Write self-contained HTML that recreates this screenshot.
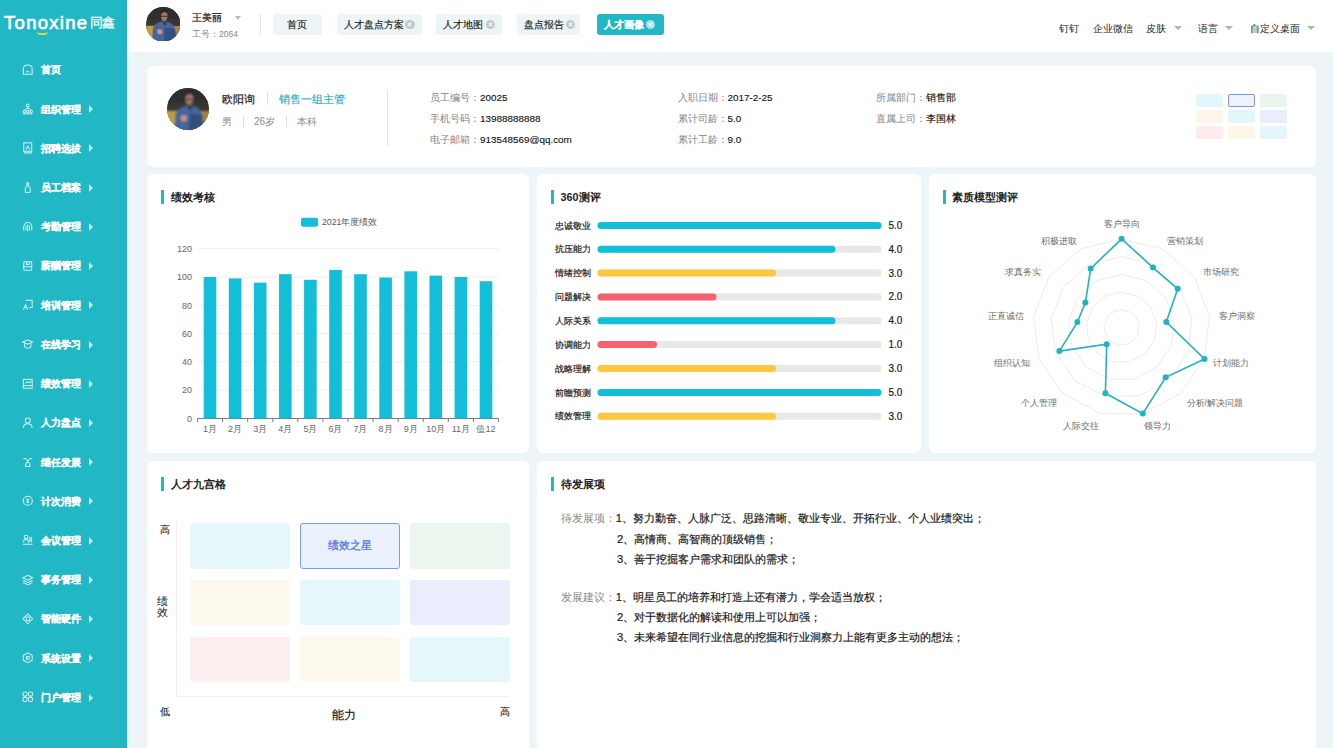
<!DOCTYPE html><html><head><meta charset="utf-8"><style>
*{box-sizing:border-box;margin:0;padding:0}
html,body{width:1333px;height:748px;overflow:hidden;background:#edf5f8;font-family:"Liberation Sans",sans-serif;color:#333}
.ab{position:absolute;white-space:nowrap}
#side{position:absolute;left:0;top:0;width:126.8px;height:748px;background:#22b7c4}
#hdr{position:absolute;left:126.8px;top:0;width:1207px;height:52px;background:#fff}
.card{position:absolute;background:#fff;border-radius:6px}
.mi{position:absolute;left:0;width:126px;height:20px;color:#fff;font-weight:900;font-size:10px}
.mi .t{position:absolute;left:41px;top:3px;line-height:14px;-webkit-text-stroke:0.2px #fff}
.mi svg.ic{position:absolute;left:22.3px;top:3.6px}
.mi .ar{position:absolute;left:89px;top:5.8px;width:0;height:0;border-left:4.6px solid rgba(255,255,255,.72);border-top:4.1px solid transparent;border-bottom:4.1px solid transparent}
.tab{position:absolute;top:14px;height:21px;border-radius:3px;background:#eef5f8;font-size:10px;line-height:21px;color:#222;-webkit-text-stroke:0.15px currentColor}
.tab .x{position:absolute;top:5.8px;width:9.6px;height:9.6px;border-radius:50%;background:#c4c8cb}
.tab .x:before,.tab .x:after{content:"";position:absolute;left:4.15px;top:2.3px;width:1.3px;height:5px;background:#fff;transform:rotate(45deg)}
.tab .x:after{transform:rotate(-45deg)}
.ttl{position:absolute;font-size:10.8px;font-weight:bold;color:#222;line-height:14px}
.ttl:before{content:"";position:absolute;left:-9.2px;top:0px;width:3px;height:14px;background:#22b7c4}
.lbl{color:#888}
.tri{position:absolute;width:0;height:0;border-top:4px solid #aab3b6;border-left:4px solid transparent;border-right:4px solid transparent}
</style></head><body>

<div id="side"><div class="ab" style="left:120.8px;top:0;width:6px;height:748px;background:#21b3c6"></div>
<div class="ab" style="left:4px;top:13.2px;font-size:18.5px;line-height:20px;color:#fff;letter-spacing:1.3px;font-weight:normal;-webkit-text-stroke:0.7px #fff">Tonoxine</div>
<div class="ab" style="left:90.2px;top:15px;font-size:13.4px;line-height:16px;color:#fff;letter-spacing:-0.9px;-webkit-text-stroke:0.2px #fff">同鑫</div>
<div class="ab" style="left:37px;top:31px;width:11px;height:4px;border-bottom:2.5px solid #f5d33a;border-radius:0 0 6px 6px"></div>
<div class="mi" style="top:60.3px"><svg class="ic" width="11.5" height="11.5" viewBox="0 0 13 13" fill="none" stroke="rgba(255,255,255,.8)" stroke-width="1.15"><path d="M1.5 11.5V5.5C1.5 3 3.5 1 6.5 1S11.5 3 11.5 5.5V11.5z"/><path d="M4.5 8.8h4"/></svg><span class="t">首页</span></div>
<div class="mi" style="top:99.5px"><svg class="ic" width="11.5" height="11.5" viewBox="0 0 13 13" fill="none" stroke="rgba(255,255,255,.8)" stroke-width="1.15"><circle cx="6.5" cy="2.6" r="1.6"/><path d="M6.5 4.2v1.6M3 7.5l3.5-1.7 3.5 1.7"/><circle cx="2.6" cy="9.6" r="1.3"/><circle cx="6.5" cy="9.6" r="1.3"/><circle cx="10.4" cy="9.6" r="1.3"/><path d="M1 12.2h11"/></svg><span class="t">组织管理</span><div class="ar"></div></div>
<div class="mi" style="top:138.7px"><svg class="ic" width="11.5" height="11.5" viewBox="0 0 13 13" fill="none" stroke="rgba(255,255,255,.8)" stroke-width="1.15"><rect x="2" y="1" width="9" height="9.5"/><path d="M4.5 8.5l2-4 2 4M2 12.3h9"/></svg><span class="t">招聘选拔</span><div class="ar"></div></div>
<div class="mi" style="top:178.0px"><svg class="ic" width="11.5" height="11.5" viewBox="0 0 13 13" fill="none" stroke="rgba(255,255,255,.8)" stroke-width="1.15"><circle cx="6.5" cy="2" r="1.3"/><path d="M5.2 4.5C3.5 7 3.5 10.5 4.3 12h4.4c.8-1.5.8-5-.9-7.5z"/></svg><span class="t">员工档案</span><div class="ar"></div></div>
<div class="mi" style="top:217.2px"><svg class="ic" width="11.5" height="11.5" viewBox="0 0 13 13" fill="none" stroke="rgba(255,255,255,.8)" stroke-width="1.15"><path d="M2 10.5C1 6 3 1.5 6.5 1.5S12 6 11 10.5"/><path d="M4.5 5v6M6.5 4v7.5M8.5 5v6"/></svg><span class="t">考勤管理</span><div class="ar"></div></div>
<div class="mi" style="top:256.4px"><svg class="ic" width="11.5" height="11.5" viewBox="0 0 13 13" fill="none" stroke="rgba(255,255,255,.8)" stroke-width="1.15"><rect x="2" y="2" width="9" height="9.5" rx="1"/><path d="M2 7.5h9M5 2v3h3V2"/></svg><span class="t">薪酬管理</span><div class="ar"></div></div>
<div class="mi" style="top:295.6px"><svg class="ic" width="11.5" height="11.5" viewBox="0 0 13 13" fill="none" stroke="rgba(255,255,255,.8)" stroke-width="1.15"><path d="M4 1.5h7.5v8H8M1.5 12l2.5-5.5 2.5 5.5M2.4 10h3"/></svg><span class="t">培训管理</span><div class="ar"></div></div>
<div class="mi" style="top:334.8px"><svg class="ic" width="11.5" height="11.5" viewBox="0 0 13 13" fill="none" stroke="rgba(255,255,255,.8)" stroke-width="1.15"><path d="M1 4.5l5.5-2.5 5.5 2.5-5.5 2.5z"/><path d="M3 5.8v4.2c2 2 5 2 7 0V5.8"/></svg><span class="t">在线学习</span><div class="ar"></div></div>
<div class="mi" style="top:374.1px"><svg class="ic" width="11.5" height="11.5" viewBox="0 0 13 13" fill="none" stroke="rgba(255,255,255,.8)" stroke-width="1.15"><rect x="1.5" y="1.5" width="10" height="10"/><path d="M1.5 8.5h10M3.5 6l2.5-2 2 1.5 2.5-2"/></svg><span class="t">绩效管理</span><div class="ar"></div></div>
<div class="mi" style="top:413.3px"><svg class="ic" width="11.5" height="11.5" viewBox="0 0 13 13" fill="none" stroke="rgba(255,255,255,.8)" stroke-width="1.15"><circle cx="6.5" cy="4" r="2.8"/><path d="M1.5 12.5c0-3 2.2-5 5-5s5 2 5 5"/></svg><span class="t">人力盘点</span><div class="ar"></div></div>
<div class="mi" style="top:452.5px"><svg class="ic" width="11.5" height="11.5" viewBox="0 0 13 13" fill="none" stroke="rgba(255,255,255,.8)" stroke-width="1.15"><path d="M1.5 3c2.5-1 4.5 1 5 4M11.5 3c-2.5-1-4.5 1-5 4M4 12c0-3 1-5 2.5-5S9 9 9 12z"/></svg><span class="t">继任发展</span><div class="ar"></div></div>
<div class="mi" style="top:491.7px"><svg class="ic" width="11.5" height="11.5" viewBox="0 0 13 13" fill="none" stroke="rgba(255,255,255,.8)" stroke-width="1.15"><circle cx="6.5" cy="6.5" r="5.2"/><path d="M4.7 4l1.8 2.3 1.8-2.3M6.5 6.3v3.2M4.6 7.5h3.8"/></svg><span class="t">计次消费</span><div class="ar"></div></div>
<div class="mi" style="top:530.9px"><svg class="ic" width="11.5" height="11.5" viewBox="0 0 13 13" fill="none" stroke="rgba(255,255,255,.8)" stroke-width="1.15"><circle cx="4.5" cy="3.5" r="2"/><path d="M1.5 9.5c0-2 1.4-3.3 3-3.3s3 1.3 3 3.3"/><circle cx="9.6" cy="5" r="1.4"/><path d="M8 9.5c.3-1.5 1-2.2 1.6-2.2s1.4.7 1.7 2.2M1 11.5h11"/></svg><span class="t">会议管理</span><div class="ar"></div></div>
<div class="mi" style="top:570.2px"><svg class="ic" width="11.5" height="11.5" viewBox="0 0 13 13" fill="none" stroke="rgba(255,255,255,.8)" stroke-width="1.15"><path d="M6.5 1.5l5.5 2.8-5.5 2.8L1 4.3z"/><path d="M1 7l5.5 2.8L12 7M1 9.5l5.5 2.8 5.5-2.8"/></svg><span class="t">事务管理</span><div class="ar"></div></div>
<div class="mi" style="top:609.4px"><svg class="ic" width="11.5" height="11.5" viewBox="0 0 13 13" fill="none" stroke="rgba(255,255,255,.8)" stroke-width="1.15"><path d="M6.5 1l5.5 5.5-5.5 5.5L1 6.5z"/><rect x="4.5" y="4.5" width="4" height="4" rx="1"/></svg><span class="t">智能硬件</span><div class="ar"></div></div>
<div class="mi" style="top:648.6px"><svg class="ic" width="11.5" height="11.5" viewBox="0 0 13 13" fill="none" stroke="rgba(255,255,255,.8)" stroke-width="1.15"><path d="M6.5 1l5 2.8v5.4l-5 2.8-5-2.8V3.8z"/><rect x="5" y="5" width="3" height="3"/></svg><span class="t">系统设置</span><div class="ar"></div></div>
<div class="mi" style="top:687.8px"><svg class="ic" width="11.5" height="11.5" viewBox="0 0 13 13" fill="none" stroke="rgba(255,255,255,.8)" stroke-width="1.15"><rect x="1" y="1" width="4.8" height="4.8" rx="2"/><rect x="7.2" y="1" width="4.8" height="4.8" rx="2"/><rect x="1" y="7.2" width="4.8" height="4.8" rx="2"/><rect x="7.2" y="7.2" width="4.8" height="4.8" rx="2"/></svg><span class="t">门户管理</span><div class="ar"></div></div>
</div>
<div id="hdr"></div>
<svg class="ab" style="left:145.8px;top:6.6px" width="34.5" height="34.5" viewBox="0 0 100 100"><defs><clipPath id="c163"><circle cx="50" cy="50" r="50"/></clipPath><filter id="f163" x="-20%" y="-20%" width="140%" height="140%"><feGaussianBlur stdDeviation="2.2"/></filter></defs><g clip-path="url(#c163)"><rect width="100" height="100" fill="#383634"/><g filter="url(#f163)"><rect x="-5" y="-5" width="110" height="40" fill="#2f2e2d"/><path d="M-5 54 L32 54 L30 88 L-5 88z" fill="#c09e3a"/><path d="M70 55 L105 55 L105 82 L70 84z" fill="#a3873a"/><path d="M18 105 L20 62 C23 50 34 44 46 42 L62 42 C74 46 82 54 84 64 L88 105z" fill="#46659a"/><path d="M55 60 L84 64 L88 105 L52 105z" fill="#33507e"/><path d="M47 42 L55 56 L62 42z" fill="#2a4068"/><ellipse cx="53" cy="26" rx="9.5" ry="15" fill="#9c7664"/><path d="M42 22 C40 4 66 2 64 21 C60 12 48 12 42 22z" fill="#2a221e"/><path d="M43 27h20" stroke="#2f2622" stroke-width="2.4"/><ellipse cx="40" cy="72" rx="8" ry="8" fill="#c0947f"/></g></g></svg>
<div class="ab" style="left:192px;top:10.8px;font-size:9.7px;line-height:14px;color:#222;-webkit-text-stroke:0.2px #222">王美丽</div>
<div class="tri" style="left:234.5px;top:15.8px;border-top-color:#bbb;border-left-width:3.6px;border-right-width:3.6px"></div>
<div class="ab" style="left:192px;top:28px;font-size:8.5px;line-height:12px;color:#888">工号：2064</div>
<div class="ab" style="left:260px;top:14px;width:1px;height:21px;background:#e3e3e3"></div>
<div class="tab" style="left:273.0px;width:48.5px;text-align:center">首页</div>
<div class="tab" style="left:336.5px;width:85.0px;"><span style="position:absolute;left:7px">人才盘点方案</span><span class="x" style="left:68.7px;"></span></div>
<div class="tab" style="left:436.0px;width:66.0px;"><span style="position:absolute;left:7px">人才地图</span><span class="x" style="left:49.6px;"></span></div>
<div class="tab" style="left:517.0px;width:63.0px;"><span style="position:absolute;left:7px">盘点报告</span><span class="x" style="left:48.6px;"></span></div>
<div class="tab" style="left:597.0px;width:66.5px;background:#22b7c4;color:#fff;font-weight:bold;"><span style="position:absolute;left:7px">人才画像</span><span class="x" style="left:48.9px;background:rgba(255,255,255,.6)"></span></div>
<div class="ab" style="left:1058.5px;top:21.5px;font-size:9.8px;line-height:14px;color:#222">钉钉</div>
<div class="ab" style="left:1093.0px;top:21.5px;font-size:9.8px;line-height:14px;color:#222">企业微信</div>
<div class="ab" style="left:1146.0px;top:21.5px;font-size:9.8px;line-height:14px;color:#222">皮肤</div>
<div class="tri" style="left:1174.0px;top:26px"></div>
<div class="ab" style="left:1198.0px;top:21.5px;font-size:9.8px;line-height:14px;color:#222">语言</div>
<div class="tri" style="left:1225.0px;top:26px"></div>
<div class="ab" style="left:1250.0px;top:21.5px;font-size:9.8px;line-height:14px;color:#222">自定义桌面</div>
<div class="tri" style="left:1307.0px;top:26px"></div>
<div class="card" style="left:147.2px;top:66px;width:1168.8px;height:100.5px"></div>
<svg class="ab" style="left:166.5px;top:87.7px" width="42.0" height="42.0" viewBox="0 0 100 100"><defs><clipPath id="c187"><circle cx="50" cy="50" r="50"/></clipPath><filter id="f187" x="-20%" y="-20%" width="140%" height="140%"><feGaussianBlur stdDeviation="2.2"/></filter></defs><g clip-path="url(#c187)"><rect width="100" height="100" fill="#383634"/><g filter="url(#f187)"><rect x="-5" y="-5" width="110" height="40" fill="#2f2e2d"/><path d="M-5 54 L32 54 L30 88 L-5 88z" fill="#c09e3a"/><path d="M70 55 L105 55 L105 82 L70 84z" fill="#a3873a"/><path d="M18 105 L20 62 C23 50 34 44 46 42 L62 42 C74 46 82 54 84 64 L88 105z" fill="#46659a"/><path d="M55 60 L84 64 L88 105 L52 105z" fill="#33507e"/><path d="M47 42 L55 56 L62 42z" fill="#2a4068"/><ellipse cx="53" cy="26" rx="9.5" ry="15" fill="#9c7664"/><path d="M42 22 C40 4 66 2 64 21 C60 12 48 12 42 22z" fill="#2a221e"/><path d="M43 27h20" stroke="#2f2622" stroke-width="2.4"/><ellipse cx="40" cy="72" rx="8" ry="8" fill="#c0947f"/></g></g></svg>
<div class="ab" style="left:222.2px;top:91.5px;font-size:11.3px;line-height:15px;color:#1a1a1a;-webkit-text-stroke:0.2px #1a1a1a">欧阳询</div>
<div class="ab" style="left:266.5px;top:92px;width:1px;height:13px;background:#ddd"></div>
<div class="ab" style="left:278.5px;top:91.5px;font-size:11px;line-height:15px;color:#1eaac2;-webkit-text-stroke:0.15px #1eaac2">销售一组主管</div>
<div class="ab" style="left:222px;top:115px;font-size:10px;line-height:13px;color:#888">男</div>
<div class="ab" style="left:243px;top:116px;width:1px;height:11px;background:#ddd"></div>
<div class="ab" style="left:254px;top:115px;font-size:10px;line-height:13px;color:#888">26岁</div>
<div class="ab" style="left:285.5px;top:116px;width:1px;height:11px;background:#ddd"></div>
<div class="ab" style="left:297px;top:115px;font-size:10px;line-height:13px;color:#888">本科</div>
<div class="ab" style="left:387px;top:90px;width:1px;height:56px;background:#e3e3e3"></div>
<div class="ab" style="left:430.0px;top:91.3px;font-size:9.5px;line-height:13px"><span class="lbl" style="color:#828282">员工编号：</span><span style="color:#111;-webkit-text-stroke:0.12px #111;font-size:9.9px">20025</span></div>
<div class="ab" style="left:430.0px;top:111.8px;font-size:9.5px;line-height:13px"><span class="lbl" style="color:#828282">手机号码：</span><span style="color:#111;-webkit-text-stroke:0.12px #111;font-size:9.9px">13988888888</span></div>
<div class="ab" style="left:430.0px;top:132.5px;font-size:9.5px;line-height:13px"><span class="lbl" style="color:#828282">电子邮箱：</span><span style="color:#111;-webkit-text-stroke:0.12px #111;font-size:9.9px">913548569@qq.com</span></div>
<div class="ab" style="left:677.5px;top:91.3px;font-size:9.5px;line-height:13px"><span class="lbl" style="color:#828282">入职日期：</span><span style="color:#111;-webkit-text-stroke:0.12px #111;font-size:9.9px">2017-2-25</span></div>
<div class="ab" style="left:677.5px;top:111.8px;font-size:9.5px;line-height:13px"><span class="lbl" style="color:#828282">累计司龄：</span><span style="color:#111;-webkit-text-stroke:0.12px #111;font-size:9.9px">5.0</span></div>
<div class="ab" style="left:677.5px;top:132.5px;font-size:9.5px;line-height:13px"><span class="lbl" style="color:#828282">累计工龄：</span><span style="color:#111;-webkit-text-stroke:0.12px #111;font-size:9.9px">9.0</span></div>
<div class="ab" style="left:876.0px;top:91.3px;font-size:9.5px;line-height:13px"><span class="lbl" style="color:#828282">所属部门：</span><span style="color:#111;-webkit-text-stroke:0.12px #111;font-size:9.9px">销售部</span></div>
<div class="ab" style="left:876.0px;top:111.8px;font-size:9.5px;line-height:13px"><span class="lbl" style="color:#828282">直属上司：</span><span style="color:#111;-webkit-text-stroke:0.12px #111;font-size:9.9px">李国林</span></div>
<div class="ab" style="left:1196.4px;top:94.3px;width:27px;height:12.5px;border-radius:2px;background:#e3f6fb;"></div>
<div class="ab" style="left:1228.0px;top:94.3px;width:27px;height:12.5px;border-radius:2px;border:1px solid #7e95e8;background:#eef2fd;"></div>
<div class="ab" style="left:1259.6px;top:94.3px;width:27px;height:12.5px;border-radius:2px;background:#e9f5ec;"></div>
<div class="ab" style="left:1196.4px;top:110.3px;width:27px;height:12.5px;border-radius:2px;background:#fdf7ea;"></div>
<div class="ab" style="left:1228.0px;top:110.3px;width:27px;height:12.5px;border-radius:2px;background:#e3f6f8;"></div>
<div class="ab" style="left:1259.6px;top:110.3px;width:27px;height:12.5px;border-radius:2px;background:#eaedfc;"></div>
<div class="ab" style="left:1196.4px;top:126.3px;width:27px;height:12.5px;border-radius:2px;background:#fdebee;"></div>
<div class="ab" style="left:1228.0px;top:126.3px;width:27px;height:12.5px;border-radius:2px;background:#fdf7ea;"></div>
<div class="ab" style="left:1259.6px;top:126.3px;width:27px;height:12.5px;border-radius:2px;background:#e3f6fb;"></div>
<div class="card" style="left:147.2px;top:173.5px;width:382.3px;height:279.5px"></div>
<div class="card" style="left:537.3px;top:173.5px;width:383.7px;height:279.5px"></div>
<div class="card" style="left:929px;top:173.5px;width:387px;height:279.5px"></div>
<div class="card" style="left:147.2px;top:461px;width:382.3px;height:300px"></div>
<div class="card" style="left:537.3px;top:461px;width:778.7px;height:300px"></div>
<div class="ttl" style="left:170.5px;top:190px">绩效考核</div>
<div class="ttl" style="left:560.5px;top:190px">360测评</div>
<div class="ttl" style="left:952px;top:190px">素质模型测评</div>
<div class="ttl" style="left:170.5px;top:477px">人才九宫格</div>
<div class="ttl" style="left:560.5px;top:477px">待发展项</div>
<svg class="ab" style="left:0;top:0" width="1333" height="748"><text x="192" y="421.6" text-anchor="end" font-size="9" fill="#666" font-family="Liberation Sans">0</text><line x1="197.5" x2="498.5" y1="390.1" y2="390.1" stroke="#eeeeee" stroke-width="1"/><text x="192" y="393.3" text-anchor="end" font-size="9" fill="#666" font-family="Liberation Sans">20</text><line x1="197.5" x2="498.5" y1="361.8" y2="361.8" stroke="#eeeeee" stroke-width="1"/><text x="192" y="365.0" text-anchor="end" font-size="9" fill="#666" font-family="Liberation Sans">40</text><line x1="197.5" x2="498.5" y1="333.5" y2="333.5" stroke="#eeeeee" stroke-width="1"/><text x="192" y="336.7" text-anchor="end" font-size="9" fill="#666" font-family="Liberation Sans">60</text><line x1="197.5" x2="498.5" y1="305.3" y2="305.3" stroke="#eeeeee" stroke-width="1"/><text x="192" y="308.5" text-anchor="end" font-size="9" fill="#666" font-family="Liberation Sans">80</text><line x1="197.5" x2="498.5" y1="277.0" y2="277.0" stroke="#eeeeee" stroke-width="1"/><text x="192" y="280.2" text-anchor="end" font-size="9" fill="#666" font-family="Liberation Sans">100</text><line x1="197.5" x2="498.5" y1="248.7" y2="248.7" stroke="#eeeeee" stroke-width="1"/><text x="192" y="251.9" text-anchor="end" font-size="9" fill="#666" font-family="Liberation Sans">120</text><line x1="197.5" x2="498.5" y1="418.5" y2="418.5" stroke="#7a7a7a" stroke-width="1"/><rect x="203.7" y="277.0" width="12.6" height="141.4" fill="#12bed8"/><rect x="228.8" y="278.4" width="12.6" height="140.0" fill="#12bed8"/><rect x="253.9" y="282.6" width="12.6" height="135.8" fill="#12bed8"/><rect x="279.0" y="274.2" width="12.6" height="144.2" fill="#12bed8"/><rect x="304.1" y="279.8" width="12.6" height="138.6" fill="#12bed8"/><rect x="329.2" y="269.9" width="12.6" height="148.5" fill="#12bed8"/><rect x="354.2" y="274.2" width="12.6" height="144.2" fill="#12bed8"/><rect x="379.3" y="277.5" width="12.6" height="140.9" fill="#12bed8"/><rect x="404.4" y="271.3" width="12.6" height="147.1" fill="#12bed8"/><rect x="429.5" y="275.6" width="12.6" height="142.8" fill="#12bed8"/><rect x="454.6" y="277.0" width="12.6" height="141.4" fill="#12bed8"/><rect x="479.7" y="281.2" width="12.6" height="137.2" fill="#12bed8"/><line x1="197.5" x2="197.5" y1="418.5" y2="422" stroke="#7a7a7a" stroke-width="1"/><line x1="222.6" x2="222.6" y1="418.5" y2="422" stroke="#7a7a7a" stroke-width="1"/><line x1="247.7" x2="247.7" y1="418.5" y2="422" stroke="#7a7a7a" stroke-width="1"/><line x1="272.8" x2="272.8" y1="418.5" y2="422" stroke="#7a7a7a" stroke-width="1"/><line x1="297.8" x2="297.8" y1="418.5" y2="422" stroke="#7a7a7a" stroke-width="1"/><line x1="322.9" x2="322.9" y1="418.5" y2="422" stroke="#7a7a7a" stroke-width="1"/><line x1="348.0" x2="348.0" y1="418.5" y2="422" stroke="#7a7a7a" stroke-width="1"/><line x1="373.1" x2="373.1" y1="418.5" y2="422" stroke="#7a7a7a" stroke-width="1"/><line x1="398.2" x2="398.2" y1="418.5" y2="422" stroke="#7a7a7a" stroke-width="1"/><line x1="423.2" x2="423.2" y1="418.5" y2="422" stroke="#7a7a7a" stroke-width="1"/><line x1="448.3" x2="448.3" y1="418.5" y2="422" stroke="#7a7a7a" stroke-width="1"/><line x1="473.4" x2="473.4" y1="418.5" y2="422" stroke="#7a7a7a" stroke-width="1"/><line x1="498.5" x2="498.5" y1="418.5" y2="422" stroke="#7a7a7a" stroke-width="1"/><text x="210.0" y="432.0" text-anchor="middle" font-size="9" fill="#666" font-family="Liberation Sans">1月</text><text x="235.1" y="432.0" text-anchor="middle" font-size="9" fill="#666" font-family="Liberation Sans">2月</text><text x="260.2" y="432.0" text-anchor="middle" font-size="9" fill="#666" font-family="Liberation Sans">3月</text><text x="285.3" y="432.0" text-anchor="middle" font-size="9" fill="#666" font-family="Liberation Sans">4月</text><text x="310.4" y="432.0" text-anchor="middle" font-size="9" fill="#666" font-family="Liberation Sans">5月</text><text x="335.5" y="432.0" text-anchor="middle" font-size="9" fill="#666" font-family="Liberation Sans">6月</text><text x="360.5" y="432.0" text-anchor="middle" font-size="9" fill="#666" font-family="Liberation Sans">7月</text><text x="385.6" y="432.0" text-anchor="middle" font-size="9" fill="#666" font-family="Liberation Sans">8月</text><text x="410.7" y="432.0" text-anchor="middle" font-size="9" fill="#666" font-family="Liberation Sans">9月</text><text x="435.8" y="432.0" text-anchor="middle" font-size="9" fill="#666" font-family="Liberation Sans">10月</text><text x="460.9" y="432.0" text-anchor="middle" font-size="9" fill="#666" font-family="Liberation Sans">11月</text><text x="486.0" y="432.0" text-anchor="middle" font-size="9" fill="#666" font-family="Liberation Sans">值12</text><rect x="301" y="217.7" width="17" height="9" rx="2" fill="#12bed8"/><text x="322" y="225.2" font-size="8.7" fill="#555" font-family="Liberation Sans">2021年度绩效</text><text x="555" y="228.6" font-size="9" fill="#1a1a1a" stroke="#1a1a1a" stroke-width="0.2" font-family="Liberation Sans">忠诚敬业</text><rect x="597.5" y="221.9" width="284" height="7" rx="3.5" fill="#e8e8e8"/><rect x="597.5" y="221.9" width="284.0" height="7" rx="3.5" fill="#12bed8"/><text x="888.5" y="228.8" font-size="10" fill="#1a1a1a" stroke="#1a1a1a" stroke-width="0.2" font-family="Liberation Sans">5.0</text><text x="555" y="252.4" font-size="9" fill="#1a1a1a" stroke="#1a1a1a" stroke-width="0.2" font-family="Liberation Sans">抗压能力</text><rect x="597.5" y="245.8" width="284" height="7" rx="3.5" fill="#e8e8e8"/><rect x="597.5" y="245.8" width="238.0" height="7" rx="3.5" fill="#12bed8"/><text x="888.5" y="252.7" font-size="10" fill="#1a1a1a" stroke="#1a1a1a" stroke-width="0.2" font-family="Liberation Sans">4.0</text><text x="555" y="276.3" font-size="9" fill="#1a1a1a" stroke="#1a1a1a" stroke-width="0.2" font-family="Liberation Sans">情绪控制</text><rect x="597.5" y="269.6" width="284" height="7" rx="3.5" fill="#e8e8e8"/><rect x="597.5" y="269.6" width="178.5" height="7" rx="3.5" fill="#fdc83d"/><text x="888.5" y="276.5" font-size="10" fill="#1a1a1a" stroke="#1a1a1a" stroke-width="0.2" font-family="Liberation Sans">3.0</text><text x="555" y="300.2" font-size="9" fill="#1a1a1a" stroke="#1a1a1a" stroke-width="0.2" font-family="Liberation Sans">问题解决</text><rect x="597.5" y="293.5" width="284" height="7" rx="3.5" fill="#e8e8e8"/><rect x="597.5" y="293.5" width="119.0" height="7" rx="3.5" fill="#f6616f"/><text x="888.5" y="300.4" font-size="10" fill="#1a1a1a" stroke="#1a1a1a" stroke-width="0.2" font-family="Liberation Sans">2.0</text><text x="555" y="324.0" font-size="9" fill="#1a1a1a" stroke="#1a1a1a" stroke-width="0.2" font-family="Liberation Sans">人际关系</text><rect x="597.5" y="317.3" width="284" height="7" rx="3.5" fill="#e8e8e8"/><rect x="597.5" y="317.3" width="238.0" height="7" rx="3.5" fill="#12bed8"/><text x="888.5" y="324.2" font-size="10" fill="#1a1a1a" stroke="#1a1a1a" stroke-width="0.2" font-family="Liberation Sans">4.0</text><text x="555" y="347.8" font-size="9" fill="#1a1a1a" stroke="#1a1a1a" stroke-width="0.2" font-family="Liberation Sans">协调能力</text><rect x="597.5" y="341.1" width="284" height="7" rx="3.5" fill="#e8e8e8"/><rect x="597.5" y="341.1" width="59.5" height="7" rx="3.5" fill="#f6616f"/><text x="888.5" y="348.0" font-size="10" fill="#1a1a1a" stroke="#1a1a1a" stroke-width="0.2" font-family="Liberation Sans">1.0</text><text x="555" y="371.7" font-size="9" fill="#1a1a1a" stroke="#1a1a1a" stroke-width="0.2" font-family="Liberation Sans">战略理解</text><rect x="597.5" y="365.0" width="284" height="7" rx="3.5" fill="#e8e8e8"/><rect x="597.5" y="365.0" width="178.5" height="7" rx="3.5" fill="#fdc83d"/><text x="888.5" y="371.9" font-size="10" fill="#1a1a1a" stroke="#1a1a1a" stroke-width="0.2" font-family="Liberation Sans">3.0</text><text x="555" y="395.6" font-size="9" fill="#1a1a1a" stroke="#1a1a1a" stroke-width="0.2" font-family="Liberation Sans">前瞻预测</text><rect x="597.5" y="388.9" width="284" height="7" rx="3.5" fill="#e8e8e8"/><rect x="597.5" y="388.9" width="284.0" height="7" rx="3.5" fill="#12bed8"/><text x="888.5" y="395.8" font-size="10" fill="#1a1a1a" stroke="#1a1a1a" stroke-width="0.2" font-family="Liberation Sans">5.0</text><text x="555" y="419.4" font-size="9" fill="#1a1a1a" stroke="#1a1a1a" stroke-width="0.2" font-family="Liberation Sans">绩效管理</text><rect x="597.5" y="412.7" width="284" height="7" rx="3.5" fill="#e8e8e8"/><rect x="597.5" y="412.7" width="178.5" height="7" rx="3.5" fill="#fdc83d"/><text x="888.5" y="419.6" font-size="10" fill="#1a1a1a" stroke="#1a1a1a" stroke-width="0.2" font-family="Liberation Sans">3.0</text><polygon points="1121.6,309.8 1129.8,311.8 1136.2,317.4 1139.2,325.4 1138.1,333.8 1133.3,340.7 1125.8,344.7 1117.4,344.7 1109.9,340.7 1105.1,333.8 1104.0,325.4 1107.0,317.4 1113.4,311.8" fill="none" stroke="#ececec" stroke-width="1"/><polygon points="1121.6,292.1 1138.1,296.2 1150.7,307.4 1156.7,323.2 1154.7,340.1 1145.1,354.0 1130.1,361.9 1113.1,361.9 1098.1,354.0 1088.5,340.1 1086.5,323.2 1092.5,307.4 1105.1,296.2" fill="none" stroke="#ececec" stroke-width="1"/><polygon points="1121.6,274.4 1146.3,280.5 1165.3,297.3 1174.3,321.1 1171.2,346.3 1156.8,367.2 1134.3,379.1 1108.9,379.1 1086.4,367.2 1072.0,346.3 1068.9,321.1 1077.9,297.3 1096.9,280.5" fill="none" stroke="#ececec" stroke-width="1"/><polygon points="1121.6,256.7 1154.5,264.8 1179.9,287.3 1191.9,319.0 1187.8,352.6 1168.5,380.5 1138.5,396.2 1104.7,396.2 1074.7,380.5 1055.4,352.6 1051.3,319.0 1063.3,287.3 1088.7,264.8" fill="none" stroke="#ececec" stroke-width="1"/><polygon points="1121.6,239.0 1162.7,249.1 1194.4,277.2 1209.5,316.8 1204.3,358.9 1180.3,393.7 1142.8,413.4 1100.4,413.4 1062.9,393.7 1038.9,358.9 1033.7,316.8 1048.8,277.2 1080.5,249.1" fill="none" stroke="#ececec" stroke-width="1"/><polygon points="1121.6,238.8 1153.0,267.6 1177.7,288.8 1166.3,322.1 1204.5,359.0 1165.7,377.3 1142.8,413.6 1105.4,393.2 1106.7,344.3 1059.4,351.1 1077.4,322.1 1085.4,302.5 1090.7,268.6" fill="none" stroke="#22b2c4" stroke-width="1.6"/><circle cx="1121.6" cy="238.8" r="3" fill="#22b2c4"/><circle cx="1153.0" cy="267.6" r="3" fill="#22b2c4"/><circle cx="1177.7" cy="288.8" r="3" fill="#22b2c4"/><circle cx="1166.3" cy="322.1" r="3" fill="#22b2c4"/><circle cx="1204.5" cy="359.0" r="3" fill="#22b2c4"/><circle cx="1165.7" cy="377.3" r="3" fill="#22b2c4"/><circle cx="1142.8" cy="413.6" r="3" fill="#22b2c4"/><circle cx="1105.4" cy="393.2" r="3" fill="#22b2c4"/><circle cx="1106.7" cy="344.3" r="3" fill="#22b2c4"/><circle cx="1059.4" cy="351.1" r="3" fill="#22b2c4"/><circle cx="1077.4" cy="322.1" r="3" fill="#22b2c4"/><circle cx="1085.4" cy="302.5" r="3" fill="#22b2c4"/><circle cx="1090.7" cy="268.6" r="3" fill="#22b2c4"/><text x="1121.6" y="227.3" text-anchor="middle" font-size="8.5" fill="#6a6a6a" font-family="Liberation Sans">客户导向</text><text x="1184.8" y="244.0" text-anchor="middle" font-size="8.5" fill="#6a6a6a" font-family="Liberation Sans">营销策划</text><text x="1220.5" y="274.6" text-anchor="middle" font-size="8.5" fill="#6a6a6a" font-family="Liberation Sans">市场研究</text><text x="1237.2" y="319.2" text-anchor="middle" font-size="8.5" fill="#6a6a6a" font-family="Liberation Sans">客户洞察</text><text x="1231.4" y="365.7" text-anchor="middle" font-size="8.5" fill="#6a6a6a" font-family="Liberation Sans">计划能力</text><text x="1214.7" y="406.4" text-anchor="middle" font-size="8.5" fill="#6a6a6a" font-family="Liberation Sans">分析/解决问题</text><text x="1157.7" y="428.5" text-anchor="middle" font-size="8.5" fill="#6a6a6a" font-family="Liberation Sans">领导力</text><text x="1080.9" y="428.5" text-anchor="middle" font-size="8.5" fill="#6a6a6a" font-family="Liberation Sans">人际交往</text><text x="1039.0" y="406.4" text-anchor="middle" font-size="8.5" fill="#6a6a6a" font-family="Liberation Sans">个人管理</text><text x="1011.9" y="365.7" text-anchor="middle" font-size="8.5" fill="#6a6a6a" font-family="Liberation Sans">组织认知</text><text x="1006.0" y="319.2" text-anchor="middle" font-size="8.5" fill="#6a6a6a" font-family="Liberation Sans">正直诚信</text><text x="1022.8" y="274.6" text-anchor="middle" font-size="8.5" fill="#6a6a6a" font-family="Liberation Sans">求真务实</text><text x="1058.8" y="244.0" text-anchor="middle" font-size="8.5" fill="#6a6a6a" font-family="Liberation Sans">积极进取</text><line x1="176.5" x2="176.5" y1="521.5" y2="697" stroke="#f1f1f1"/><line x1="176.5" x2="509" y1="696.5" y2="696.5" stroke="#f1f1f1"/></svg>
<div class="ab" style="left:190.0px;top:523.0px;width:99.5px;height:45.5px;border-radius:3px;background:#e6f7fb;"></div>
<div class="ab" style="left:300.2px;top:523.0px;width:99.5px;height:45.5px;border-radius:3px;background:#ebf0fd;border:1px solid #7f9bef;"></div>
<div class="ab" style="left:410.0px;top:523.0px;width:99.5px;height:45.5px;border-radius:3px;background:#ebf6ee;"></div>
<div class="ab" style="left:190.0px;top:579.8px;width:99.5px;height:45.5px;border-radius:3px;background:#fdf9ee;"></div>
<div class="ab" style="left:300.2px;top:579.8px;width:99.5px;height:45.5px;border-radius:3px;background:#e6f7fb;"></div>
<div class="ab" style="left:410.0px;top:579.8px;width:99.5px;height:45.5px;border-radius:3px;background:#eaeefc;"></div>
<div class="ab" style="left:190.0px;top:636.5px;width:99.5px;height:45.5px;border-radius:3px;background:#fdeef0;"></div>
<div class="ab" style="left:300.2px;top:636.5px;width:99.5px;height:45.5px;border-radius:3px;background:#fdf9ee;"></div>
<div class="ab" style="left:410.0px;top:636.5px;width:99.5px;height:45.5px;border-radius:3px;background:#e6f7fb;"></div>
<div class="ab" style="left:300.2px;top:523px;width:99.5px;height:45.5px;line-height:45.5px;text-align:center;font-size:11px;color:#4b70e6;-webkit-text-stroke:0.25px #4b70e6">绩效之星</div>
<div class="ab" style="left:159.5px;top:524px;font-size:9.5px;line-height:12px;color:#222;-webkit-text-stroke:0.15px #222">高</div>
<div class="ab" style="left:157px;top:595.5px;font-size:11px;line-height:11px;color:#222;white-space:normal;width:12px">绩效</div>
<div class="ab" style="left:159.5px;top:705.5px;font-size:9.5px;line-height:12px;color:#222;-webkit-text-stroke:0.15px #222">低</div>
<div class="ab" style="left:332px;top:707.5px;font-size:11.5px;line-height:15px;color:#1a1a1a;-webkit-text-stroke:0.2px #1a1a1a">能力</div>
<div class="ab" style="left:499.5px;top:705.5px;font-size:9.5px;line-height:12px;color:#222;-webkit-text-stroke:0.15px #222">高</div>
<div class="ab" style="left:561px;top:511.0px;font-size:11px;line-height:15px;color:#888">待发展项：</div>
<div class="ab" style="left:615.8px;top:511.0px;font-size:11.2px;line-height:15px;color:#1a1a1a;-webkit-text-stroke:0.2px #1a1a1a">1、努力勤奋、人脉广泛、思路清晰、敬业专业、开拓行业、个人业绩突出；</div>
<div class="ab" style="left:617.0px;top:532.1px;font-size:11.2px;line-height:15px;color:#1a1a1a;-webkit-text-stroke:0.2px #1a1a1a">2、高情商、高智商的顶级销售；</div>
<div class="ab" style="left:617.0px;top:552.2px;font-size:11.2px;line-height:15px;color:#1a1a1a;-webkit-text-stroke:0.2px #1a1a1a">3、善于挖掘客户需求和团队的需求；</div>
<div class="ab" style="left:561px;top:590.3px;font-size:11px;line-height:15px;color:#888">发展建议：</div>
<div class="ab" style="left:615.8px;top:590.3px;font-size:11.2px;line-height:15px;color:#1a1a1a;-webkit-text-stroke:0.2px #1a1a1a">1、明星员工的培养和打造上还有潜力，学会适当放权；</div>
<div class="ab" style="left:617.0px;top:609.7px;font-size:11.2px;line-height:15px;color:#1a1a1a;-webkit-text-stroke:0.2px #1a1a1a">2、对于数据化的解读和使用上可以加强；</div>
<div class="ab" style="left:617.0px;top:629.8px;font-size:11.2px;line-height:15px;color:#1a1a1a;-webkit-text-stroke:0.2px #1a1a1a">3、未来希望在同行业信息的挖掘和行业洞察力上能有更多主动的想法；</div>
</body></html>
